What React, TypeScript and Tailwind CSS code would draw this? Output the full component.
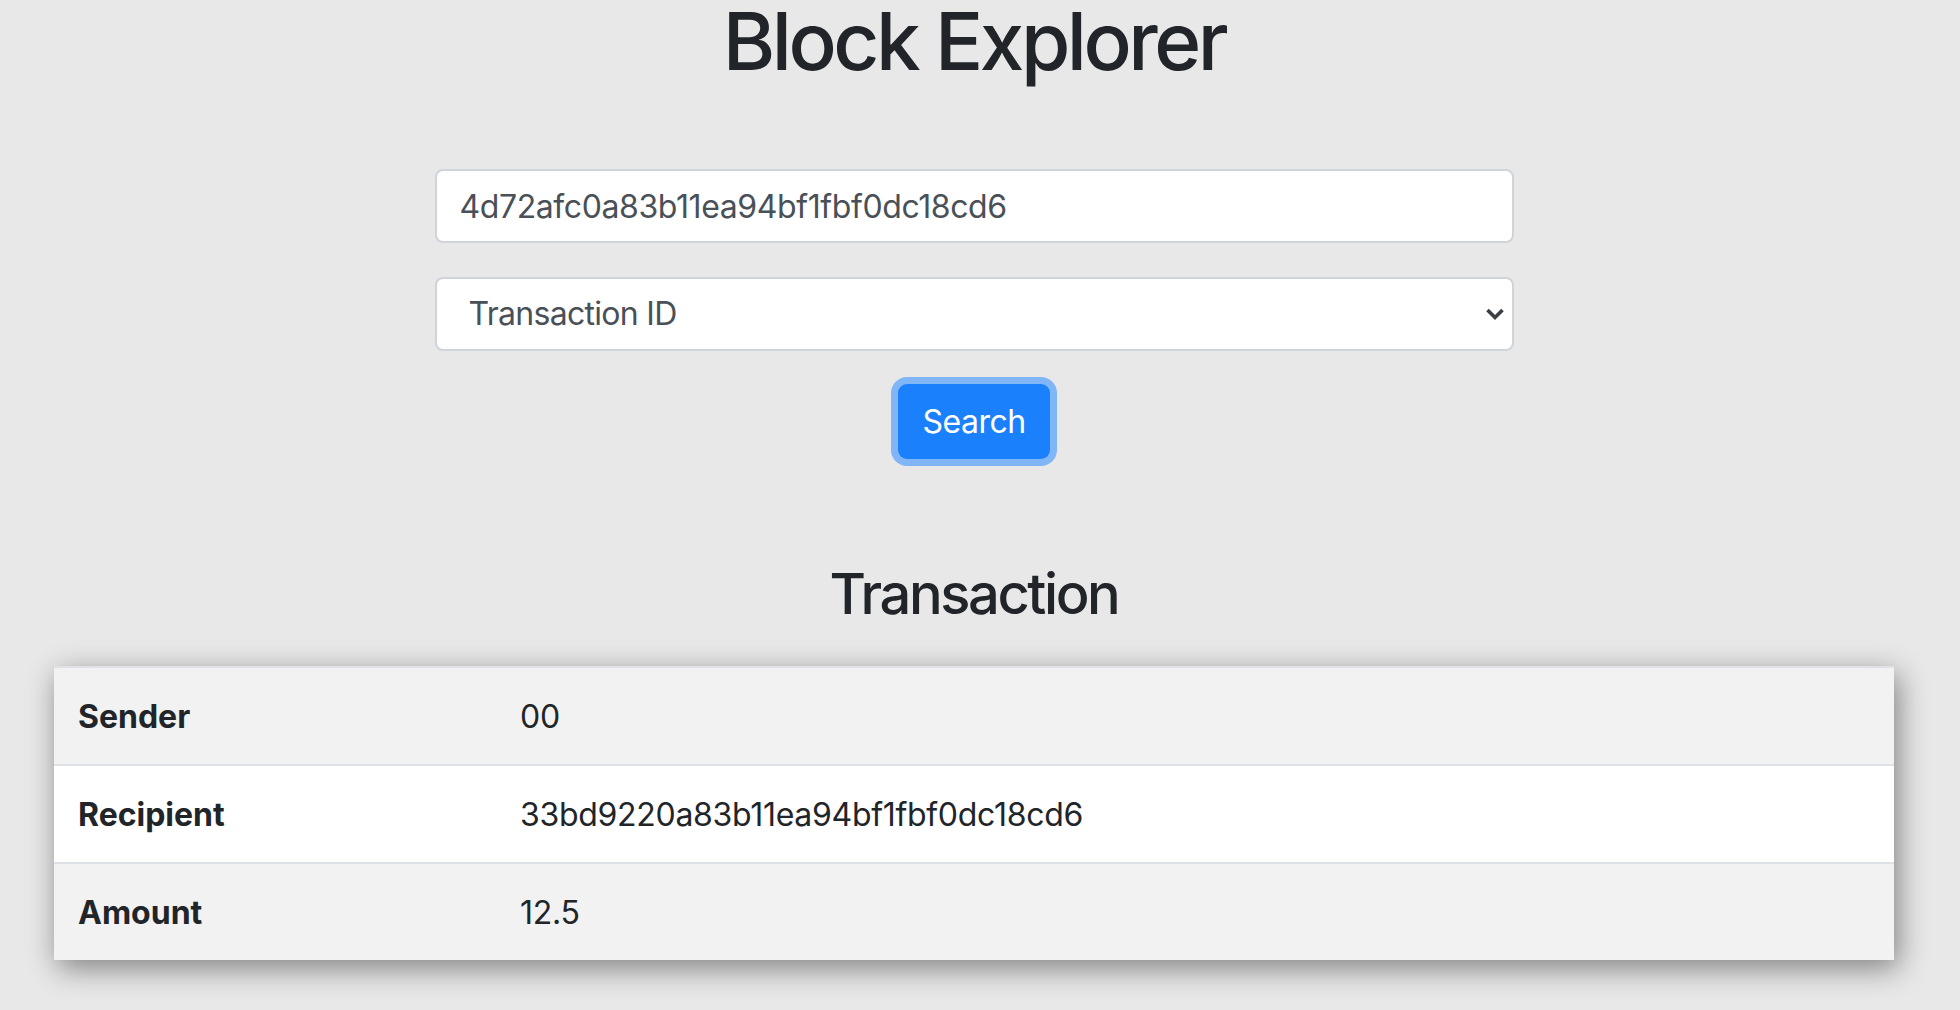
import React from "react";

// rows of the transaction table
const rows = [
  { label: "Sender", value: "00" },
  { label: "Recipient", value: "33bd9220a83b11ea94bf1fbf0dc18cd6" },
  { label: "Amount", value: "12.5" },
];

function Chevron() {
  return (
    <svg width="20" height="14" viewBox="0 0 20 14" className="shrink-0">
      <path d="M2.5 3 L10 10.5 L17.5 3" fill="none" stroke="#3a3f44" strokeWidth="3.6" />
    </svg>
  );
}

export default function App() {
  return (
    <div
      className="min-h-[1010px] w-full bg-[#e8e8e8] text-[#212529] overflow-hidden"
      style={{ fontFamily: "Inter, 'Noto Sans', 'Liberation Sans', sans-serif" }}
    >
      <div className="w-[1948px] flex flex-col items-center">
        <h1 className="text-[80px] leading-[82px] font-medium tracking-[-3.5px]">Block Explorer</h1>

        {/* search form */}
        <div className="w-[1079px] mt-[87px] flex flex-col items-stretch">
          <div className="h-[74px] bg-white border-2 border-[#ced4da] rounded-[8px] flex items-center pl-[23px] pt-[1px] text-[32px] text-[#495057] tracking-[-0.4px]">
            4d72afc0a83b11ea94bf1fbf0dc18cd6
          </div>
          <div className="h-[74px] mt-[34px] bg-white border-2 border-[#ced4da] rounded-[8px] flex items-center justify-between pl-[32px] pr-[7px] text-[32px] text-[#495057]">
            <span className="tracking-[-0.7px]">Transaction ID</span>
            <Chevron />
          </div>
        </div>

        <div className="mt-[26px] p-[7px] rounded-[16px] bg-[#80b6f7]">
          <button className="h-[75px] w-[152px] rounded-[9px] bg-[#1a80fc] text-white text-[32px] tracking-[-0.5px] flex items-center justify-center">
            Search
          </button>
        </div>

        <h3 className="mt-[95px] text-[56px] leading-[67px] font-medium tracking-[-2.4px]">Transaction</h3>

        {/* transaction table */}
        <div className="mt-[38px] w-[1840px] shadow-[4px_8px_28px_rgba(0,0,0,0.45)] border-t-2 border-[#dee2e6]">
          {rows.map((r, i) => (
            <div
              key={r.label}
              className={`flex items-center pt-[2px] text-[32px] ${i % 2 === 0 ? "bg-[#f2f2f2]" : "bg-white"} ${
                i > 0 ? "h-[98px] border-t-2 border-[#dee2e6]" : "h-[96px]"
              }`}
            >
              <div className="w-[442px] pl-[24px] font-bold">{r.label}</div>
              <div className="pl-[24px] tracking-[-0.3px]">{r.value}</div>
            </div>
          ))}
        </div>
      </div>
    </div>
  );
}
